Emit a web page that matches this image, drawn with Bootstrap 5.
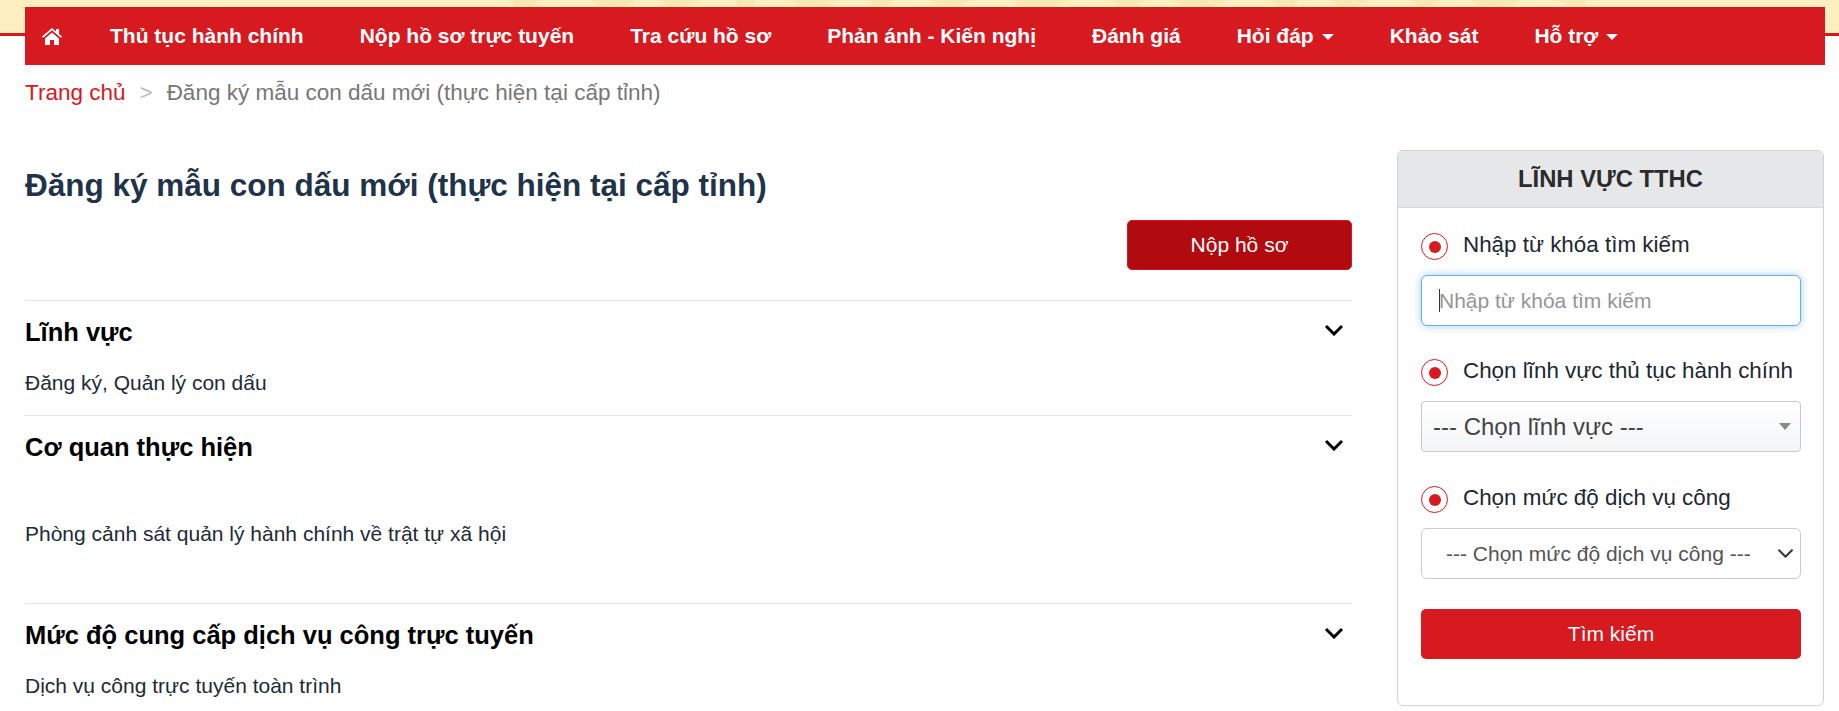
<!DOCTYPE html>
<html lang="vi">
<head>
    <meta charset="UTF-8">
    <title>Đăng ký mẫu con dấu mới</title>
    <meta name="viewport" content="width=device-width, initial-scale=1.0">
    <link href="https://cdn.jsdelivr.net/npm/bootstrap@5.3.3/dist/css/bootstrap.min.css" rel="stylesheet">
    <style>
        html, body {
            height: 711px;
            overflow: hidden;
        }

        body {
            font-family: "Liberation Sans", Arial, sans-serif;
            color: #212b36;
            background: #fff;
        }

        .top-banner {
            height: 36px;
            background-color: #fdefc0;
            border-bottom: 3px solid #d71920;
        }

        .banner-art {
            display: block;
            width: 100%;
            height: 7px;
        }

        .page-wrap {
            padding-left: 25px;
            width: 1825px;
        }

        .main-menu {
            background-color: #d71920;
            height: 58px;
            margin-top: -29px;
            padding-left: 17px;
        }

        .main-menu .nav-link {
            color: #fff;
            font-weight: 700;
            font-size: 21px;
            padding: 0;
            margin-right: 56px;
            white-space: nowrap;
        }

        .main-menu .home-link {
            margin-right: 48px;
        }

        .main-menu .dropdown-toggle::after {
            margin-left: 8px;
            vertical-align: 3px;
        }

        .home-icon {
            width: 20px;
            height: 17px;
            fill: #fff;
            display: block;
        }

        .crumbs {
            margin: 13px 0 0;
            font-size: 22.5px;
            line-height: 30px;
            color: #777;
        }

        .crumbs a {
            color: #d71920;
            text-decoration: none;
        }

        .crumbs .sep {
            color: #bbb;
            margin: 0 14px;
        }

        .main-row {
            margin-top: 42px;
        }

        .content-col {
            width: 1327px;
        }

        .side-col {
            width: 427px;
            margin-left: 45px;
        }

        .page-title {
            font-size: 31.5px;
            font-weight: 700;
            color: #1f3349;
            margin: 16px 0 0;
            line-height: 38px;
        }

        .btn-row {
            margin: 16px 0 30px;
        }

        .btn-submit {
            background-color: #b20b0f;
            border: 1px solid #d71920;
            color: #fff;
            font-size: 21px;
            width: 225px;
            height: 50px;
            border-radius: 5px;
        }

        .info-block {
            border-top: 1px solid #e3e5e9;
            padding-top: 16px;
        }

        .info-head {
            font-size: 25.5px;
            font-weight: 700;
            color: #000;
            line-height: 30px;
        }

        .info-text {
            font-size: 21px;
            line-height: 28px;
            color: #212b36;
            margin: 22px 0 18px;
        }

        .info-text-wide {
            margin: 58px 0 55px;
        }

        .chevron {
            width: 20px;
            height: 12px;
            margin-right: 8px;
            margin-top: -5px;
            fill: none;
            stroke: #000;
            stroke-width: 3;
        }

        .side-card {
            height: 556px;
            border: 1px solid #d0d2d5;
            border-radius: 6px;
        }

        .side-head {
            height: 57px;
            background-color: #e6e7e9;
            border-bottom: 1px solid #d9dadc;
            font-size: 23.8px;
            font-weight: 700;
            color: #2b2b2b;
            text-align: center;
            line-height: 55px;
            border-radius: 5px 5px 0 0;
        }

        .side-body {
            padding: 25px 22px 0 23px;
        }

        .filter-row {
            margin-top: 33px;
        }

        .filter-row-last {
            margin-top: 34px;
        }

        .filter-gap {
            margin-top: 15px;
        }

        .radio-mark {
            width: 27px;
            height: 27px;
            border: 1px solid #d71920;
            border-radius: 50%;
            flex-shrink: 0;
            display: flex;
            align-items: center;
            justify-content: center;
            margin-right: 15px;
        }

        .radio-mark::before {
            content: "";
            width: 12px;
            height: 12px;
            border-radius: 50%;
            background-color: #d71920;
        }

        .filter-label {
            font-size: 22.4px;
            color: #1d2733;
            line-height: 24px;
            white-space: nowrap;
            margin-bottom: 3px;
        }

        .filter-input.form-control {
            height: 51px;
            font-size: 21px;
            border: 1px solid #66afe9;
            border-radius: 6px;
            padding-left: 17px;
            box-shadow: 0 0 8px rgba(102, 175, 233, .6);
        }

        .filter-input::placeholder {
            color: #959595;
        }

        /* the blinking text cursor caught in the screenshot */
        .input-cursor {
            position: absolute;
            left: 18px;
            top: 14px;
            width: 1px;
            height: 23px;
            background-color: #333;
        }

        .fake-select {
            height: 51px;
            border: 1px solid #c8c8c8;
            border-radius: 4px;
            background: linear-gradient(#fff, #f3f5f7);
            font-size: 24px;
            color: #444;
            padding-left: 11px;
        }

        .fake-select::after {
            content: "";
            margin-left: auto;
            margin-right: 9px;
            border-left: 6px solid transparent;
            border-right: 6px solid transparent;
            border-top: 7px solid #888;
        }

        .filter-select.form-select {
            height: 51px;
            font-size: 21px;
            color: #555;
            border: 1px solid #ccc;
            border-radius: 6px;
            padding-left: 24px;
            background-size: 17px 17px;
            background-position: right 6px center;
        }

        .btn-search {
            background-color: #d71920;
            color: #fff;
            font-size: 21px;
            height: 50px;
            border: 0;
            border-radius: 5px;
            margin-top: 30px;
        }
    </style>
</head>
<body>
    <div class="top-banner">
        <!-- faint ornament along the top of the banner -->
        <svg class="banner-art" viewBox="0 0 1839 7" preserveAspectRatio="none" fill="#fce8b3">
            <path d="M510 0h30l-8 7h-16zM590 0h46l-10 7h-26zM660 0h40l-14 7h-18zM735 0h22l-4 7h-14zM790 0h50l-12 7h-30zM870 0h24l-6 7h-14zM930 0h40l-10 7h-22zM1010 0h60l-16 7h-30zM1110 0h36l-8 7h-20zM1170 0h60l-20 7h-24zM1270 0h30l-8 7h-14zM1330 0h40l-14 7h-16zM1410 0h30l-8 7h-12zM1470 0h50l-10 7h-30zM1560 0h28l-6 7h-12z"/>
        </svg>
    </div>

    <div class="page-wrap">
        <!-- menu -->
        <nav class="main-menu d-flex align-items-center">
            <a class="nav-link home-link" href="#">
                <svg class="home-icon" viewBox="0 0 20 17"><path d="M10 0 0 8.500l1.200 1.300L10 2.300l8.800 7.500L20 8.500l-3-2.600V1h-3v2.400zM3 10.500V17h5v-5h4v5h5v-6.500L10 4.500z"/></svg>
            </a>
            <a class="nav-link" href="#">Thủ tục hành chính</a>
            <a class="nav-link" href="#">Nộp hồ sơ trực tuyến</a>
            <a class="nav-link" href="#">Tra cứu hồ sơ</a>
            <a class="nav-link" href="#">Phản ánh - Kiến nghị</a>
            <a class="nav-link" href="#">Đánh giá</a>
            <a class="nav-link dropdown-toggle" href="#">Hỏi đáp</a>
            <a class="nav-link" href="#">Khảo sát</a>
            <a class="nav-link dropdown-toggle" href="#">Hỗ trợ</a>
        </nav>

        <p class="crumbs"><a href="#">Trang chủ</a><span class="sep">&gt;</span>Đăng ký mẫu con dấu mới (thực hiện tại cấp tỉnh)</p>

        <div class="d-flex main-row">
            <div class="content-col">
                <h1 class="page-title">Đăng ký mẫu con dấu mới (thực hiện tại cấp tỉnh)</h1>
                <div class="text-end btn-row">
                    <button class="btn btn-submit">Nộp hồ sơ</button>
                </div>

                <div class="info-block">
                    <div class="d-flex justify-content-between align-items-center info-head">Lĩnh vực
                        <svg class="chevron" viewBox="0 0 20 12"><path d="M2 2l8 8 8-8"/></svg>
                    </div>
                    <p class="info-text">Đăng ký, Quản lý con dấu</p>
                </div>
                <div class="info-block">
                    <div class="d-flex justify-content-between align-items-center info-head">Cơ quan thực hiện
                        <svg class="chevron" viewBox="0 0 20 12"><path d="M2 2l8 8 8-8"/></svg>
                    </div>
                    <p class="info-text info-text-wide">Phòng cảnh sát quản lý hành chính về trật tự xã hội</p>
                </div>
                <div class="info-block">
                    <div class="d-flex justify-content-between align-items-center info-head">Mức độ cung cấp dịch vụ công trực tuyến
                        <svg class="chevron" viewBox="0 0 20 12"><path d="M2 2l8 8 8-8"/></svg>
                    </div>
                    <p class="info-text">Dịch vụ công trực tuyến toàn trình</p>
                </div>
            </div>

            <aside class="side-col">
                <div class="side-card">
                    <div class="side-head">LĨNH VỰC TTHC</div>
                    <div class="side-body">
                        <div class="d-flex align-items-center">
                            <span class="radio-mark"></span><span class="filter-label">Nhập từ khóa tìm kiếm</span>
                        </div>
                        <div class="position-relative filter-gap">
                            <input class="form-control filter-input" type="text" placeholder="Nhập từ khóa tìm kiếm">
                            <span class="input-cursor"></span>
                        </div>

                        <div class="d-flex align-items-center filter-row">
                            <span class="radio-mark"></span><span class="filter-label">Chọn lĩnh vực thủ tục hành chính</span>
                        </div>
                        <div class="fake-select d-flex align-items-center filter-gap">--- Chọn lĩnh vực ---</div>

                        <div class="d-flex align-items-center filter-row-last">
                            <span class="radio-mark"></span><span class="filter-label">Chọn mức độ dịch vụ công</span>
                        </div>
                        <select class="form-select filter-select filter-gap">
                            <option>--- Chọn mức độ dịch vụ công ---</option>
                        </select>

                        <button class="btn btn-search w-100">Tìm kiếm</button>
                    </div>
                </div>
            </aside>
        </div>
    </div>

    <script src="https://cdn.jsdelivr.net/npm/bootstrap@5.3.3/dist/js/bootstrap.bundle.min.js"></script>
</body>
</html>
